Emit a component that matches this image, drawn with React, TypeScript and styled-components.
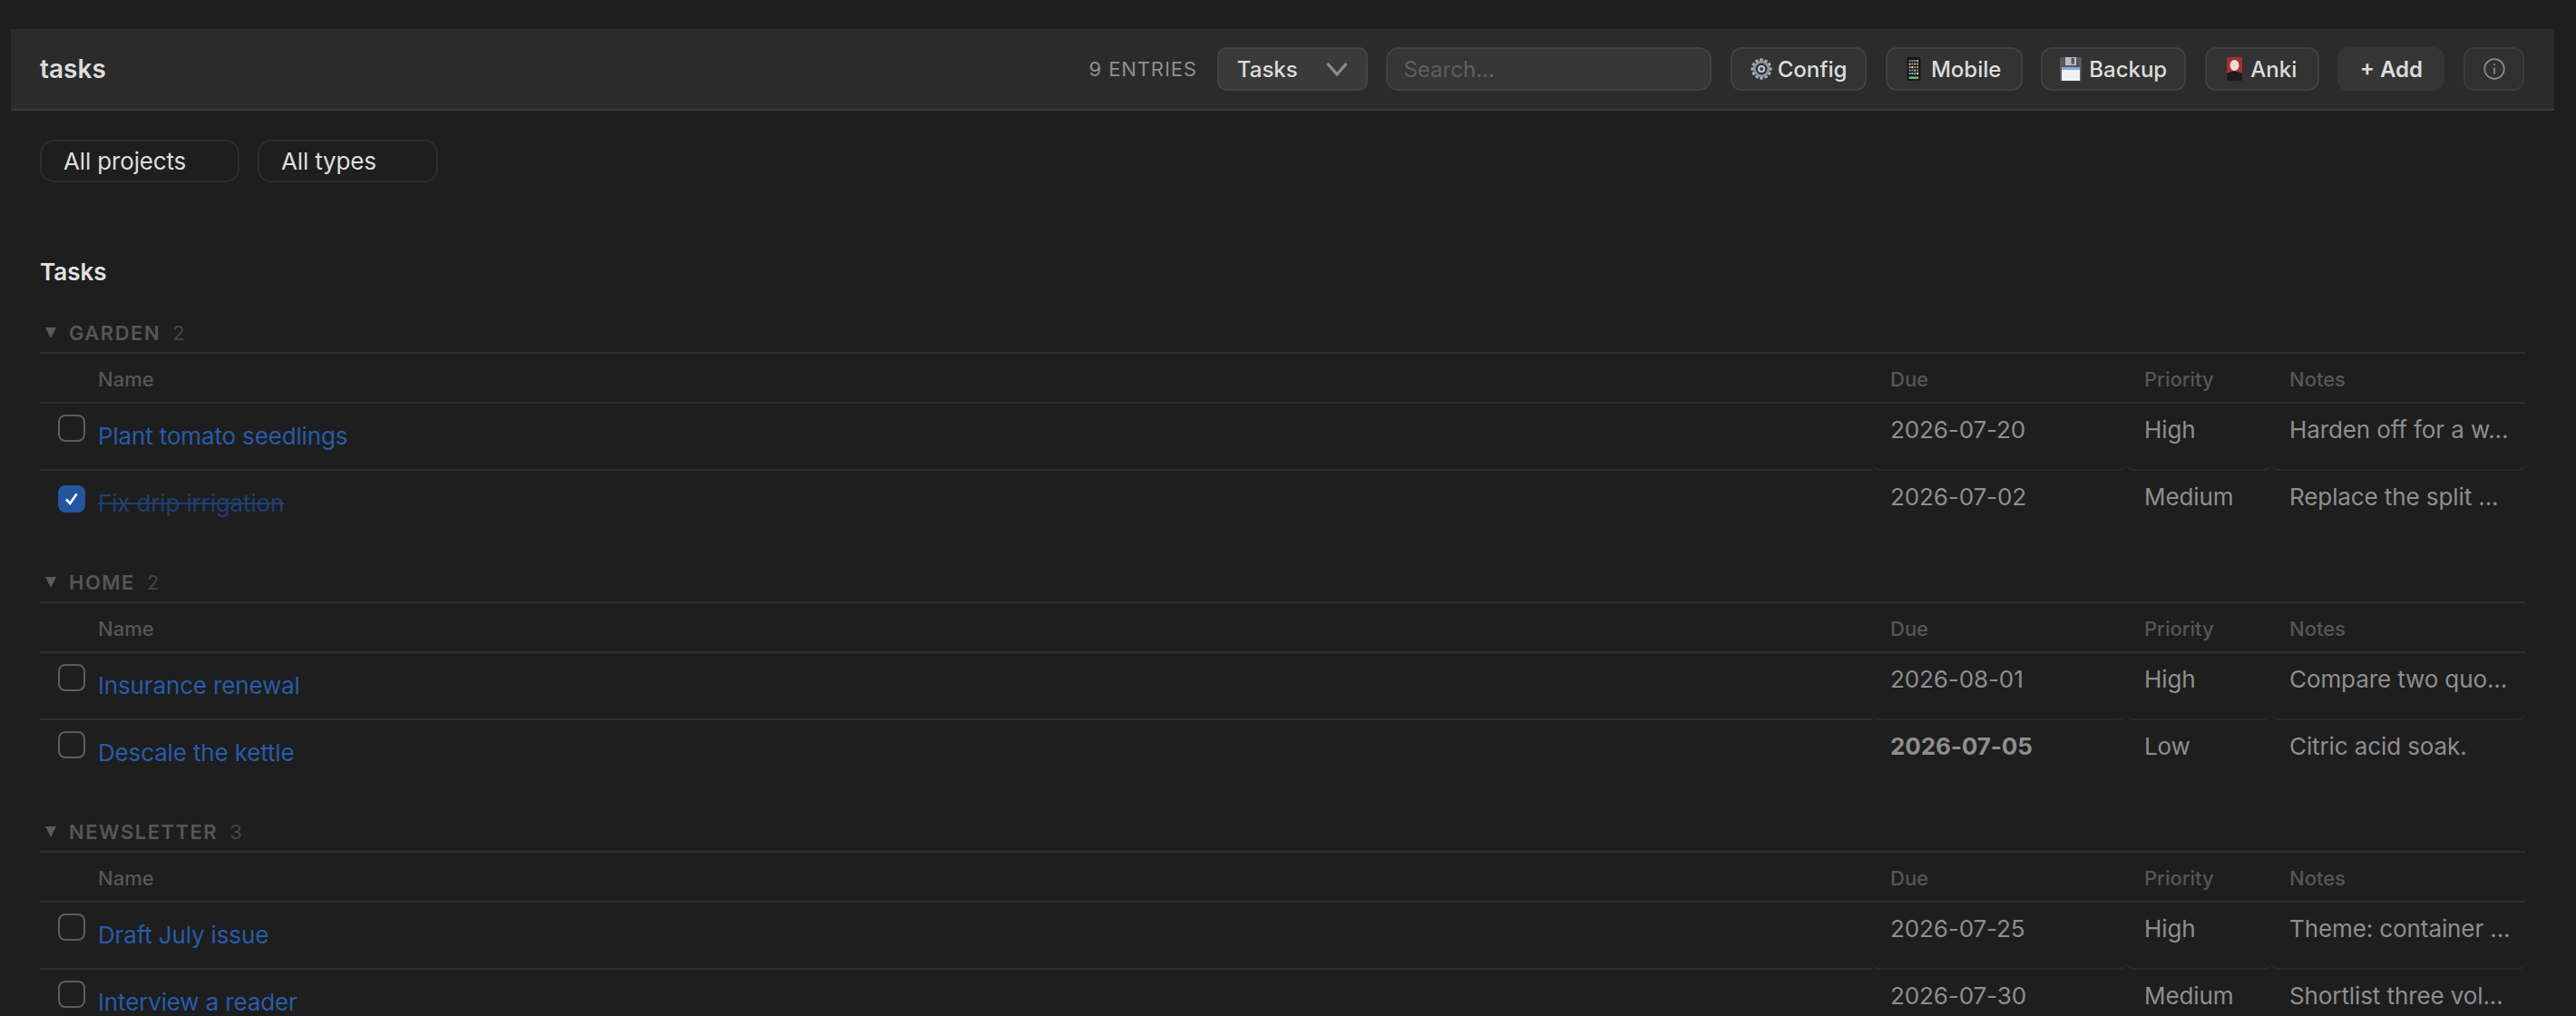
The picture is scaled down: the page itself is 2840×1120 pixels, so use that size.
import React from "react";
import styled, { createGlobalStyle } from "styled-components";

const GlobalStyle = createGlobalStyle`
  html, body {
    margin: 0;
    height: 100%;
    overflow: hidden;
    background: #1e1e1e;
    font-family: Inter, "Liberation Sans", sans-serif;
    -webkit-font-smoothing: antialiased;
  }
`;

const Page = styled.div`
  height: 1120px;
  overflow: hidden;
  box-sizing: border-box;
  padding: 32px 24px 0 12px;
  background: #1e1e1e;
`;

const Header = styled.header`
  height: 90px;
  box-sizing: border-box;
  display: flex;
  align-items: center;
  padding: 0 33px 0 32px;
  background: #2b2b2b;
  border-bottom: 2px solid #383838;
`;

const Title = styled.h1`
  margin: 0;
  font-size: 28px;
  font-weight: 600;
  color: #dcdcdc;
  margin-right: auto;
`;

const EntryCount = styled.span`
  font-size: 22px;
  letter-spacing: 0.9px;
  color: #8f8f8f;
  margin-right: 22px;
`;

const Toolbar = styled.div`
  display: flex;
  align-items: center;
  gap: 20.6px;
`;

const SelectBox = styled.div`
  width: 166px;
  height: 48px;
  box-sizing: border-box;
  display: flex;
  align-items: center;
  justify-content: space-between;
  padding: 0 20px;
  background: #3a3a3a;
  border: 2px solid #444;
  border-radius: 10px;
  font-size: 24px;
  font-weight: 500;
  color: #dcdcdc;
`;

const SearchInput = styled.input`
  width: 359px;
  height: 48px;
  box-sizing: border-box;
  padding: 0 17px;
  background: #363636;
  border: 2px solid #414141;
  border-radius: 14px;
  outline: none;
  font-family: inherit;
  font-size: 24px;
  color: #dcdcdc;
  &::placeholder {
    color: #5e5e5e;
  }
`;

const ToolButton = styled.button<{ $width: number; $gap?: number; $flat?: boolean }>`
  width: ${(p) => p.$width}px;
  height: 48px;
  box-sizing: border-box;
  display: flex;
  align-items: center;
  justify-content: center;
  gap: ${(p) => p.$gap ?? 0}px;
  padding: 0;
  background: ${(p) => (p.$flat ? "#363636" : "#333")};
  border: 2px solid ${(p) => (p.$flat ? "#363636" : "#414141")};
  border-radius: 12px;
  font-family: inherit;
  font-size: 24px;
  font-weight: ${(p) => (p.$flat ? 600 : 500)};
  color: #dcdcdc;
`;

const InfoButton = styled(ToolButton)`
  background: #303030;
  border-color: #3a3a3a;
  color: #8a8a8a;
`;

const Filters = styled.div`
  display: flex;
  gap: 20px;
  padding: 32px 0 0 32px;
`;

const FilterPill = styled.button<{ $width: number }>`
  width: ${(p) => p.$width}px;
  height: 47px;
  box-sizing: border-box;
  padding: 0 0 0 24px;
  text-align: left;
  background: transparent;
  border: 2px solid #2e2e2e;
  border-radius: 15px;
  font-family: inherit;
  font-size: 26px;
  letter-spacing: -0.15px;
  color: #dedede;
`;

const Content = styled.main`
  padding: 0 32px;
`;

const SectionTitle = styled.h2`
  margin: 0;
  padding-top: 81px;
  height: 36px;
  line-height: 36px;
  font-size: 26px;
  font-weight: 600;
  color: #e2e2e2;
`;

const GroupBlock = styled.section`
  height: 275px;
  &:first-of-type {
    margin-top: 32px;
  }
`;

const GroupHeader = styled.div`
  height: 40px;
  box-sizing: border-box;
  display: flex;
  align-items: center;
  padding: 0 0 5px 6px;
  border-bottom: 2px solid #2f2f2f;
`;

const GroupName = styled.span`
  margin-left: 14px;
  font-size: 22px;
  font-weight: 600;
  letter-spacing: 1.5px;
  color: #565656;
`;

const GroupCount = styled.span`
  margin-left: 13px;
  font-size: 22px;
  color: #444;
`;

const Table = styled.table`
  width: 100%;
  table-layout: fixed;
  border-collapse: separate;
  border-spacing: 0;
`;

const HeadCell = styled.th<{ $width?: number }>`
  ${(p) => (p.$width ? `width: ${p.$width}px;` : "")}
  height: 55px;
  box-sizing: border-box;
  padding: 2px 20px 0;
  text-align: left;
  font-size: 22px;
  font-weight: 500;
  color: #565656;
  border-bottom: 2px solid #2f2f2f;
`;

const NameHead = styled(HeadCell)`
  padding-left: 64px;
`;

const Cell = styled.td<{ $last?: boolean }>`
  height: 74px;
  box-sizing: border-box;
  padding: 13px 20px 0;
  vertical-align: top;
  font-size: 26px;
  line-height: 32px;
  letter-spacing: -0.1px;
  color: #8e8e8e;
  white-space: nowrap;
  border-bottom: 2px solid ${(p) => (p.$last ? "transparent" : "#2a2a2a")};
  border-radius: 0 0 8px 8px;
`;

const DateCell = styled(Cell)<{ $strong?: boolean }>`
  font-weight: ${(p) => (p.$strong ? 700 : 400)};
`;

const NameCell = styled.td<{ $last?: boolean }>`
  height: 74px;
  box-sizing: border-box;
  padding: 12px 20px 0;
  vertical-align: top;
  border-bottom: 2px solid ${(p) => (p.$last ? "transparent" : "#2f2f2f")};
`;

const NameRow = styled.div`
  display: flex;
  align-items: flex-start;
  gap: 14px;
`;

const CheckBox = styled.span<{ $checked?: boolean }>`
  flex: none;
  width: 30px;
  height: 30px;
  box-sizing: border-box;
  display: flex;
  align-items: center;
  justify-content: center;
  margin-top: ${(p) => (p.$checked ? 4 : 0)}px;
  border-radius: 8px;
  border: 2px solid ${(p) => (p.$checked ? "#24569f" : "#5c5c5c")};
  background: ${(p) => (p.$checked ? "#24569f" : "transparent")};
`;

const TaskLink = styled.a<{ $done?: boolean }>`
  margin-top: 8px;
  font-size: 26px;
  line-height: 32px;
  letter-spacing: -0.15px;
  color: ${(p) => (p.$done ? "#1f3f70" : "#285ba8")};
  text-decoration: ${(p) => (p.$done ? "line-through" : "none")};
`;

const Gear = () => (
  <svg width="24" height="26" viewBox="0 0 24 24">
    <g fill="#a3a9b2">
      {[0, 30, 60, 90, 120, 150, 180, 210, 240, 270, 300, 330].map((a) => (
        <rect key={a} x="10.4" y="0.6" width="3.2" height="22.8" rx="0.6" transform={`rotate(${a} 12 12)`} />
      ))}
    </g>
    <circle cx="12" cy="12" r="9" fill="#8d939c" />
    <circle cx="12" cy="12" r="6.4" fill="#33363b" />
    <circle cx="12" cy="12" r="4" fill="#c4c8ce" />
    <circle cx="12" cy="12" r="2" fill="#3a3d42" />
  </svg>
);

const appColors = ["#e5534b", "#58b368", "#4a90d9", "#e0b84c", "#b06ad0", "#5cc6d0", "#e58a3c", "#d8d8d8"];

const Phone = () => (
  <svg width="16" height="26" viewBox="0 0 16 26">
    <rect x="0.5" y="0" width="15" height="26" rx="2" fill="#15171a" />
    {[3, 6.5, 10, 13.5, 17].map((y, r) =>
      [2.6, 5.4, 8.2, 11].map((x, c) => (
        <rect key={`${r}-${c}`} x={x} y={y} width="2" height="2.2" fill={appColors[(r * 3 + c) % 8]} />
      ))
    )}
    <rect x="2.6" y="21.5" width="10.6" height="2.4" fill="#6fbf7a" />
  </svg>
);

const Floppy = () => (
  <svg width="24" height="26" viewBox="0 0 24 26">
    <rect width="24" height="26" rx="1.5" fill="#55585d" />
    <rect x="6" y="0" width="12" height="9" fill="#b9bcc1" />
    <rect x="12.5" y="1" width="3.4" height="6.6" fill="#55585d" />
    <rect x="2" y="11" width="20" height="15" fill="#eef1f5" />
    <rect x="2" y="11" width="20" height="3" fill="#7fa9e0" />
  </svg>
);

const Card = () => (
  <svg width="17" height="26" viewBox="0 0 17 26">
    <rect width="17" height="26" rx="1.5" fill="#a52f2f" />
    <path d="M0 18 Q8.5 13 17 18 V24.5 Q17 26 15.5 26 H1.5 Q0 26 0 24.5 Z" fill="#1b1b1b" />
    <ellipse cx="8.5" cy="9" rx="5" ry="6" fill="#e6e0d0" />
  </svg>
);

const Chevron = () => (
  <svg width="24" height="16" viewBox="0 0 24 16" fill="none">
    <path d="M1.5 2 L12 14 L22.5 2" stroke="#8c8c8c" strokeWidth="3.2" />
  </svg>
);

const InfoIcon = () => (
  <svg width="24" height="24" viewBox="0 0 24 24" fill="none" stroke="#8a8a8a" strokeWidth="1.7">
    <circle cx="12" cy="12" r="10.8" />
    <path d="M12 10.5 V18" />
    <path d="M12 6 V8" />
  </svg>
);

const Caret = () => (
  <svg width="12" height="12" viewBox="0 0 12 12">
    <polygon points="0,0 12,0 6,12" fill="#5a5a5a" />
  </svg>
);

const Check = () => (
  <svg width="18" height="18" viewBox="0 0 18 18" fill="none">
    <path d="M3 9.5 L7.2 14 L14.5 3.5" stroke="#fff" strokeWidth="2.6" />
  </svg>
);

type Task = { name: string; due: string; priority: string; notes: string; done?: boolean; soon?: boolean };

const groups: { name: string; count: number; tasks: Task[] }[] = [
  {
    name: "GARDEN",
    count: 2,
    tasks: [
      { name: "Plant tomato seedlings", due: "2026-07-20", priority: "High", notes: "Harden off for a w..." },
      { name: "Fix drip irrigation", due: "2026-07-02", priority: "Medium", notes: "Replace the split ...", done: true },
    ],
  },
  {
    name: "HOME",
    count: 2,
    tasks: [
      { name: "Insurance renewal", due: "2026-08-01", priority: "High", notes: "Compare two quo..." },
      { name: "Descale the kettle", due: "2026-07-05", priority: "Low", notes: "Citric acid soak.", soon: true },
    ],
  },
  {
    name: "NEWSLETTER",
    count: 3,
    tasks: [
      { name: "Draft July issue", due: "2026-07-25", priority: "High", notes: "Theme: container ..." },
      { name: "Interview a reader", due: "2026-07-30", priority: "Medium", notes: "Shortlist three vol..." },
    ],
  },
];

const App = () => (
  <Page>
    <GlobalStyle />
    <Header>
      <Title>tasks</Title>
      <EntryCount>9 ENTRIES</EntryCount>
      <Toolbar>
        <SelectBox>
          Tasks
          <Chevron />
        </SelectBox>
        <SearchInput placeholder="Search..." />
        <ToolButton $width={150} $gap={6}>
          <Gear />
          Config
        </ToolButton>
        <ToolButton $width={151} $gap={11}>
          <Phone />
          Mobile
        </ToolButton>
        <ToolButton $width={160} $gap={8}>
          <Floppy />
          Backup
        </ToolButton>
        <ToolButton $width={126} $gap={9}>
          <Card />
          Anki
        </ToolButton>
        <ToolButton $width={118} $flat>
          + Add
        </ToolButton>
        <InfoButton $width={67}>
          <InfoIcon />
        </InfoButton>
      </Toolbar>
    </Header>
    <Filters>
      <FilterPill $width={220}>All projects</FilterPill>
      <FilterPill $width={199}>All types</FilterPill>
    </Filters>
    <Content>
      <SectionTitle>Tasks</SectionTitle>
      {groups.map((group) => (
        <GroupBlock key={group.name}>
          <GroupHeader>
            <Caret />
            <GroupName>{group.name}</GroupName>
            <GroupCount>{group.count}</GroupCount>
          </GroupHeader>
          <Table>
            <thead>
              <tr>
                <NameHead>Name</NameHead>
                <HeadCell $width={280}>Due</HeadCell>
                <HeadCell $width={160}>Priority</HeadCell>
                <HeadCell $width={280}>Notes</HeadCell>
              </tr>
            </thead>
            <tbody>
              {group.tasks.map((task, idx) => {
                const last = idx === group.tasks.length - 1;
                return (
                  <tr key={task.name}>
                    <NameCell $last={last}>
                      <NameRow>
                        <CheckBox $checked={task.done}>{task.done && <Check />}</CheckBox>
                        <TaskLink $done={task.done}>{task.name}</TaskLink>
                      </NameRow>
                    </NameCell>
                    <DateCell $last={last} $strong={task.soon}>
                      {task.due}
                    </DateCell>
                    <Cell $last={last}>{task.priority}</Cell>
                    <Cell $last={last}>{task.notes}</Cell>
                  </tr>
                );
              })}
            </tbody>
          </Table>
        </GroupBlock>
      ))}
    </Content>
  </Page>
);

export default App;
